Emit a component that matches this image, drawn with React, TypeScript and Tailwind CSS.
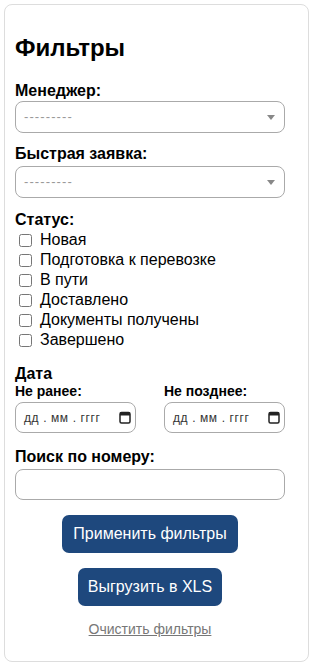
import React from 'react'

const STATUSES = [
  'Новая',
  'Подготовка к перевозке',
  'В пути',
  'Доставлено',
  'Документы получены',
  'Завершено',
]

function FakeSelect() {
  return (
    <div className="flex items-center justify-between w-[270px] h-[32px] border border-[#aaa] rounded-[8px] bg-white pl-[8px] pr-[8px]">
      <span className="text-[13px] text-[#999] tracking-[1.1px]">---------</span>
      <svg width="8" height="5" viewBox="0 0 8 5" className="mr-[1px]">
        <path d="M0 0 L8 0 L4 5 Z" fill="#888" />
      </svg>
    </div>
  )
}

function DateField() {
  return (
    <div className="flex items-center justify-between w-full h-[31px] border border-[#aaa] rounded-[8px] bg-white pl-[8px] pr-[4px]">
      <span className="whitespace-pre text-[12px] text-[#333] tracking-[0.6px]">
        {'дд . мм . гггг'}
      </span>
      <svg width="12" height="13" viewBox="0 0 12 13">
        <rect x="1" y="1.5" width="10" height="10.5" rx="1.5" fill="none" stroke="#222" strokeWidth="1.5" />
        <rect x="1" y="1.5" width="10" height="3" fill="#222" />
      </svg>
    </div>
  )
}

export default function App() {
  return (
    <div className="min-h-screen bg-white p-[4px] font-['Liberation_Sans',Arial,sans-serif] text-black">
      <div className="border border-[#ddd] rounded-[8px] pl-[10px] pr-[10px] pt-[10px] pb-[24px]">
        <h2 className="mt-[19px] mb-[20px] text-[24px] leading-[28px] font-bold">Фильтры</h2>

        <div className="mb-[12px]">
          <div className="text-[16px] leading-[18px] font-bold mb-[1px]">Менеджер:</div>
          <FakeSelect />
        </div>

        <div className="mb-[13px]">
          <div className="text-[16px] leading-[18px] font-bold mb-[3px]">Быстрая заявка:</div>
          <FakeSelect />
        </div>

        <div className="mb-[15px]">
          <div className="text-[16px] leading-[18px] font-bold mb-[1px]">Статус:</div>
          <div className="flex flex-col">
            {STATUSES.map(s => (
              <label key={s} className="flex items-center h-[20px] text-[16px]">
                <input type="checkbox" className="w-[13px] h-[13px] ml-[4px] mr-[8px]" />
                {s}
              </label>
            ))}
          </div>
        </div>

        <div className="mb-[15px]">
          <div className="text-[16px] leading-[18px] font-bold">Дата</div>
          <div className="grid grid-cols-2 gap-x-[28px] w-[270px]">
            <div>
              <div className="text-[14px] leading-[16px] font-bold mb-[3px]">Не ранее:</div>
              <DateField />
            </div>
            <div>
              <div className="text-[14px] leading-[16px] font-bold mb-[3px]">Не позднее:</div>
              <DateField />
            </div>
          </div>
        </div>

        <div className="mb-[15px]">
          <div className="text-[16px] leading-[18px] font-bold mb-[3px]">Поиск по номеру:</div>
          <input
            type="text"
            className="block w-[270px] h-[31px] border border-[#aaa] rounded-[8px] bg-white px-[8px] text-[14px]"
          />
        </div>

        <div className="flex flex-col items-center w-[270px]">
          <button className="bg-[#1e487d] text-white text-[16px] leading-[18px] px-[11px] py-[10px] rounded-[7px]">
            Применить фильтры
          </button>
          <button className="mt-[15px] bg-[#1e487d] text-white text-[16px] leading-[18px] px-[10px] py-[10px] rounded-[7px]">
            Выгрузить в XLS
          </button>
          <a className="mt-[15px] text-[14px] leading-[16px] text-[#777] underline">Очистить фильтры</a>
        </div>
      </div>
    </div>
  )
}
